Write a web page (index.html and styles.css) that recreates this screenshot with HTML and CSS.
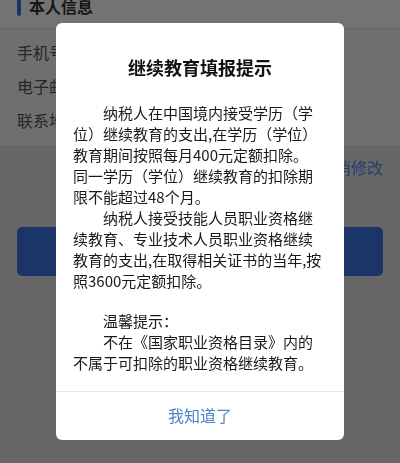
FILE: index.html
```html
<!DOCTYPE html>
<html lang="zh-CN">
<head>
<meta charset="utf-8">
<title>继续教育填报提示</title>
<link rel="stylesheet" href="styles.css">
</head>
<body>
<div class="page">
  <div class="section-head">
    <span class="bar"></span>
    <span class="head-title">本人信息</span>
  </div>
  <div class="info-list">
    <div class="info-row">手机号码</div>
    <div class="info-row">电子邮箱</div>
    <div class="info-row">联系地址</div>
  </div>
  <div class="lower">
    <div class="actions"><span class="cancel">取消修改</span></div>
    <div class="btn-wrap"><div class="primary-btn"></div></div>
  </div>
</div>

<div class="overlay">
  <div class="modal">
    <div class="modal-title">继续教育填报提示</div>
    <div class="modal-body">
      <p class="para">纳税人在中国境内接受学历（学<br>位）继续教育的支出,在学历（学位）<br>教育期间按照每月400元定额扣除。<br>同一学历（学位）继续教育的扣除期<br>限不能超过48个月。</p>
      <p class="para">纳税人接受技能人员职业资格继<br>续教育、专业技术人员职业资格继续<br>教育的支出,在取得相关证书的当年,按<br>照3600元定额扣除。</p>
      <p class="para tip">温馨提示：</p>
      <p class="para">不在《国家职业资格目录》内的<br>不属于可扣除的职业资格继续教育。</p>
    </div>
    <div class="modal-footer">我知道了</div>
  </div>
</div>
</body>
</html>
```

FILE: styles.css
```css
html, body {
  margin: 0;
  padding: 0;
}
body {
  width: 400px;
  height: 463px;
  overflow: hidden;
  background: #e4e4ec;
  font-family: "Noto Sans CJK SC", "Noto Sans", sans-serif;
}
.page {
  margin-top: -16px;
}
.section-head {
  height: 44px;
  background: #ffffff;
  display: flex;
  align-items: center;
  padding-left: 17px;
  gap: 8px;
  border-bottom: 1px solid #e2e2e2;
}
.bar {
  width: 4px;
  height: 20px;
  border-radius: 2px;
  background: #3a72e8;
}
.head-title {
  font-size: 16px;
  font-weight: bold;
  color: #333;
}
.info-list {
  background: #f6f6f6;
  padding: 6px 0 8px;
  border-bottom: 1px solid #e0e0e0;
}
.info-row {
  height: 34px;
  line-height: 34px;
  padding-left: 17px;
  font-size: 16px;
  color: #555;
}
.lower {
  background: #e4e4ec;
}
.actions {
  display: flex;
  justify-content: flex-end;
  padding: 8px 17px 0;
  height: 34px;
  line-height: 26px;
}
.cancel {
  font-size: 16px;
  color: #5b8ce6;
}
.btn-wrap {
  padding: 39px 17px 0;
}
.primary-btn {
  height: 49px;
  border-radius: 5px;
  background: #3f76e8;
}
.overlay {
  position: fixed;
  inset: 0;
  background: rgba(0, 0, 0, 0.55);
  display: flex;
  justify-content: center;
  align-items: flex-start;
  padding-top: 23px;
}
.modal {
  width: 288px;
  background: #fff;
  border-radius: 6px;
  overflow: hidden;
}
.modal-title {
  padding-top: 32px;
  height: 24px;
  line-height: 24px;
  text-align: center;
  font-size: 18px;
  font-weight: bold;
  color: #111;
}
.modal-body {
  padding: 23px 17px 18px;
  font-size: 15px;
  line-height: 21px;
  color: #1a1a1a;
}
.para {
  margin: 0;
  text-indent: 2em;
  white-space: nowrap;
}
.tip {
  margin-top: 19px;
}
.modal-footer {
  border-top: 1px solid #e8e8e8;
  height: 48px;
  line-height: 46px;
  text-align: center;
  font-size: 16px;
  color: #4a86c8;
}
```
